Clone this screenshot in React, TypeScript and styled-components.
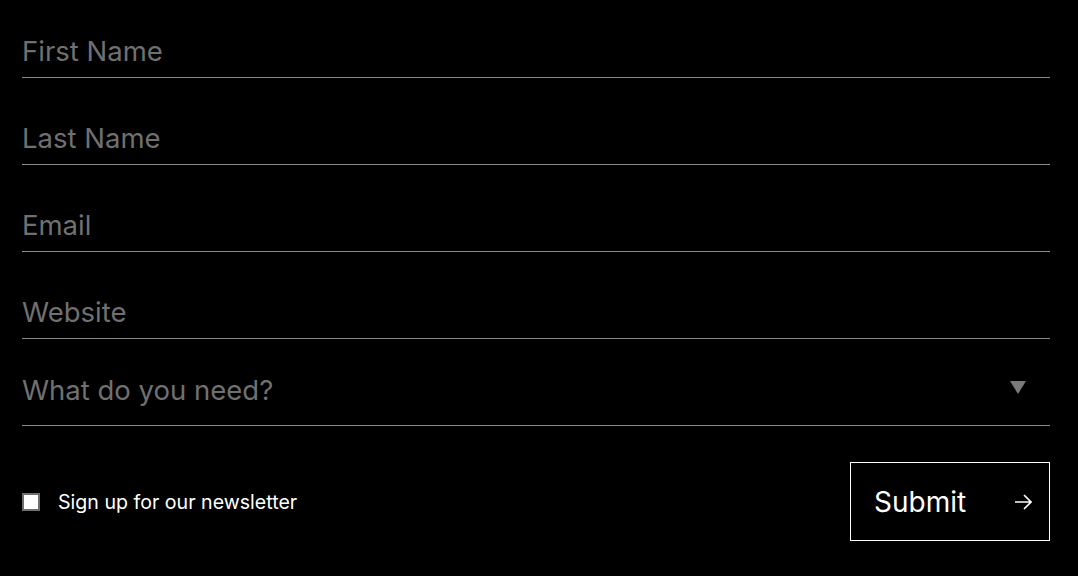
import React from "react";
import styled, { createGlobalStyle } from "styled-components";

const Global = createGlobalStyle`
  html, body { margin: 0; padding: 0; background: #000; }
  body { font-family: Inter, "Noto Sans", sans-serif; }
  * { box-sizing: border-box; }
`;

const Form = styled.form`
  width: 1078px;
  height: 576px;
  padding: 0 28px 0 22px;
  display: flex;
  flex-direction: column;
  gap: 9px;
`;

const Field = styled.input`
  display: block;
  width: 100%;
  height: 78px;
  padding: 25px 0 0 0;
  border: none;
  border-bottom: 1px solid #8a8a8a;
  background: transparent;
  color: #fff;
  font-family: Inter, "Noto Sans", sans-serif;
  font-size: 27.5px;
  outline: none;
  &::placeholder { color: #707070; }
`;

const SelectWrap = styled.div`
  position: relative;
  height: 78px;
  border-bottom: 1px solid #8a8a8a;
  display: flex;
  align-items: flex-start;
  padding-top: 27px;
`;

const SelectText = styled.span`
  color: #707070;
  font-size: 27.5px;
  line-height: 30px;
`;

const Caret = styled.span`
  position: absolute;
  right: 24px;
  top: 33px;
  width: 0;
  height: 0;
  border-left: 8px solid transparent;
  border-right: 8px solid transparent;
  border-top: 13px solid #7a7a7a;
`;

const Footer = styled.div`
  display: flex;
  align-items: center;
  justify-content: space-between;
  margin-top: 27px;
`;

const CheckLabel = styled.label`
  display: flex;
  align-items: center;
  gap: 18px;
  color: #fff;
  font-size: 19.6px;
`;

const Box = styled.span`
  width: 18px;
  height: 18px;
  background: #fff;
  border: 2px solid #6f6f6f;
`;

const Submit = styled.button`
  width: 200px;
  height: 79px;
  border: 1px solid #fff;
  background: #000;
  color: #fff;
  display: flex;
  align-items: center;
  justify-content: space-between;
  padding: 0 17px 0 23px;
  font-family: Inter, "Noto Sans", sans-serif;
  font-size: 28px;
`;

export default function App() {
  return (
    <>
      <Global />
      <Form>
        <Field placeholder="First Name" />
        <Field placeholder="Last Name" />
        <Field placeholder="Email" />
        <Field placeholder="Website" />
        <SelectWrap>
          <SelectText>What do you need?</SelectText>
          <Caret />
        </SelectWrap>
        <Footer>
          <CheckLabel>
            <Box />
            Sign up for our newsletter
          </CheckLabel>
          <Submit type="button">
            Submit
            <svg width="18" height="18" viewBox="0 0 18 18" fill="none" stroke="#fff" strokeWidth="1.6">
              <path d="M1 9h16M10 2l7 7-7 7" />
            </svg>
          </Submit>
        </Footer>
      </Form>
    </>
  );
}
